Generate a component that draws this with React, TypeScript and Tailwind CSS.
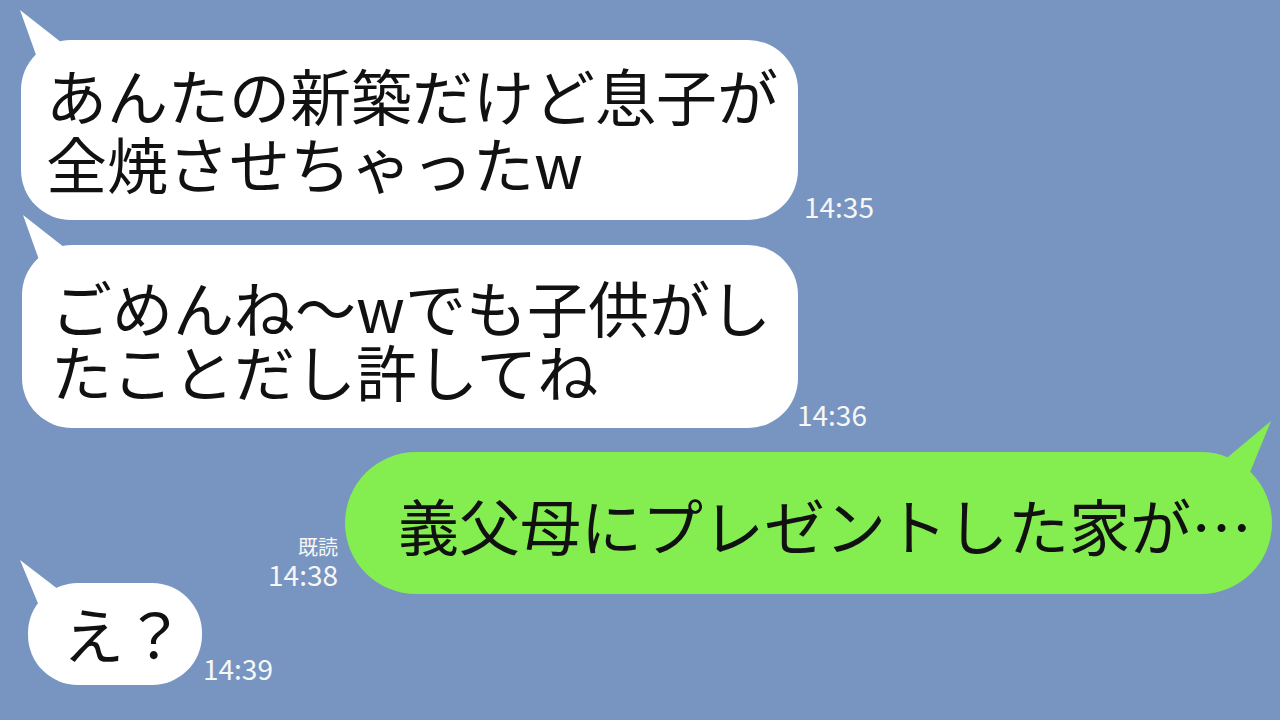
const FONT = "font-['Noto_Sans_CJK_JP','Noto_Sans',sans-serif]";

const Tail = ({ points, fill }: { points: string; fill: string }) => (
  <svg className="absolute left-0 top-0 overflow-visible" width="1" height="1">
    <polygon points={points} fill={fill} />
  </svg>
);

const Time = ({ t, className = "" }: { t: string; className?: string }) => (
  <span className={`text-[28px] leading-none text-[#f7f7f7] ${className}`}>{t}</span>
);

export default function App() {
  return (
    <div className={`w-[1280px] h-[720px] overflow-hidden bg-[#7895c1] flex flex-col pt-[40px] ${FONT}`}>
      {/* 1 */}
      <div className="flex items-end ml-[21px]">
        <div className="relative w-[777px] h-[180px] rounded-[50px] bg-white pl-[25px] pt-[21px] text-[61px] leading-[68px] text-[#111]">
          <Tail points="-1,-30 24,40 50,10" fill="#ffffff" />
          <p className="relative">あんたの新築だけど息子が</p>
          <p className="relative">全焼させちゃったw</p>
        </div>
        <Time t="14:35" className="ml-[6px]" />
      </div>

      {/* 2 */}
      <div className="flex items-end ml-[22px] mt-[25px]">
        <div className="relative w-[776px] h-[183px] rounded-[50px] bg-white pl-[29px] pt-[30px] text-[61px] leading-[64px] text-[#111]">
          <Tail points="1,-30 26,40 52,10" fill="#ffffff" />
          <p className="relative">ごめんね〜wでも子供がし</p>
          <p className="relative">たことだし許してね</p>
        </div>
        <Time t="14:36" className="-ml-[1px]" />
      </div>

      {/* 3 */}
      <div className="flex items-end justify-end pr-[8px] mt-[24px]">
        <div className="flex flex-col items-end mr-[7px] mb-[6px] text-[#f7f7f7]">
          <span className="text-[20px] leading-[26px]">既読</span>
          <Time t="14:38" />
        </div>
        <div className="relative w-[927px] h-[142px] rounded-[71px] bg-[#84ed50] pl-[53px] pt-[39px] text-[61px] leading-[68px] text-[#111]">
          <div className="absolute right-0 top-0">
            <Tail points="-1,-31 -50,10 -26,30" fill="#84ed50" />
          </div>
          <p className="relative">義父母にプレゼントした家が…</p>
        </div>
      </div>

      {/* 4 */}
      <div className="flex items-end ml-[28px] -mt-[11px]">
        <div className="relative w-[174px] h-[102px] rounded-[50px] bg-white pl-[35px] pt-[16px] text-[61px] leading-[68px] text-[#111]">
          <Tail points="-8,-23 14,30 35,10" fill="#ffffff" />
          <p className="relative">え？</p>
        </div>
        <Time t="14:39" className="ml-[1px] mb-[3px]" />
      </div>
    </div>
  );
}
